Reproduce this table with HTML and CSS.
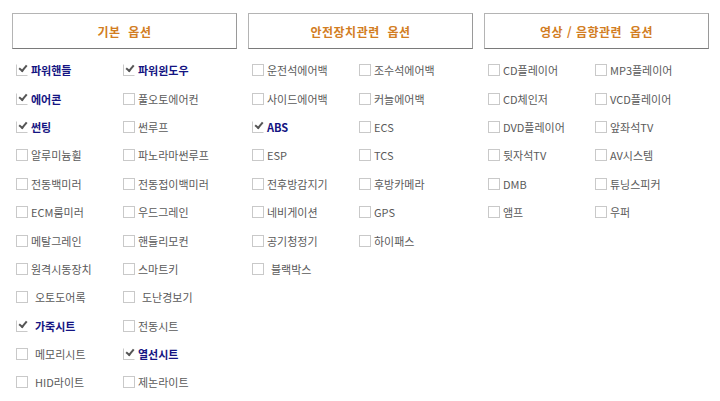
FILE: index.html
```html
<!DOCTYPE html>
<html lang="ko">
<head>
<meta charset="utf-8">
<link rel="stylesheet" href="styles.css">
</head>
<body>
<div class="page">
  <section class="group">
    <div class="head">기본&nbsp;&nbsp;옵션</div>
    <ul class="opts">
      <li class="on"><span class="cb"></span>파워핸들</li>
      <li class="on"><span class="cb"></span>파워윈도우</li>
      <li class="on"><span class="cb"></span>에어콘</li>
      <li><span class="cb"></span>풀오토에어컨</li>
      <li class="on"><span class="cb"></span>썬팅</li>
      <li><span class="cb"></span>썬루프</li>
      <li><span class="cb"></span>알루미늄휠</li>
      <li><span class="cb"></span>파노라마썬루프</li>
      <li><span class="cb"></span>전동백미러</li>
      <li><span class="cb"></span>전동접이백미러</li>
      <li><span class="cb"></span>ECM룸미러</li>
      <li><span class="cb"></span>우드그레인</li>
      <li><span class="cb"></span>메탈그레인</li>
      <li><span class="cb"></span>핸들리모컨</li>
      <li><span class="cb"></span>원격시동장치</li>
      <li><span class="cb"></span>스마트키</li>
      <li class="sp"><span class="cb"></span>오토도어록</li>
      <li class="sp"><span class="cb"></span>도난경보기</li>
      <li class="on sp"><span class="cb"></span>가죽시트</li>
      <li><span class="cb"></span>전동시트</li>
      <li class="sp"><span class="cb"></span>메모리시트</li>
      <li class="on"><span class="cb"></span>열선시트</li>
      <li class="sp"><span class="cb"></span>HID라이트</li>
      <li><span class="cb"></span>제논라이트</li>
    </ul>
  </section>
  <section class="group">
    <div class="head">안전장치관련&nbsp;&nbsp;옵션</div>
    <ul class="opts">
      <li><span class="cb"></span>운전석에어백</li>
      <li><span class="cb"></span>조수석에어백</li>
      <li><span class="cb"></span>사이드에어백</li>
      <li><span class="cb"></span>커늘에어백</li>
      <li class="on"><span class="cb"></span>ABS</li>
      <li><span class="cb"></span>ECS</li>
      <li><span class="cb"></span>ESP</li>
      <li><span class="cb"></span>TCS</li>
      <li><span class="cb"></span>전후방감지기</li>
      <li><span class="cb"></span>후방카메라</li>
      <li><span class="cb"></span>네비게이션</li>
      <li><span class="cb"></span>GPS</li>
      <li><span class="cb"></span>공기청정기</li>
      <li><span class="cb"></span>하이패스</li>
      <li class="sp"><span class="cb"></span>블랙박스</li>
    </ul>
  </section>
  <section class="group">
    <div class="head">영상&nbsp;/&nbsp;음향관련&nbsp;&nbsp;옵션</div>
    <ul class="opts">
      <li><span class="cb"></span>CD플레이어</li>
      <li><span class="cb"></span>MP3플레이어</li>
      <li><span class="cb"></span>CD체인저</li>
      <li><span class="cb"></span>VCD플레이어</li>
      <li><span class="cb"></span>DVD플레이어</li>
      <li><span class="cb"></span>앞좌석TV</li>
      <li><span class="cb"></span>뒷자석TV</li>
      <li><span class="cb"></span>AV시스템</li>
      <li><span class="cb"></span>DMB</li>
      <li><span class="cb"></span>튜닝스피커</li>
      <li><span class="cb"></span>앰프</li>
      <li><span class="cb"></span>우퍼</li>
    </ul>
  </section>
</div>
</body>
</html>
```

FILE: styles.css
```css
html, body {
  margin: 0;
  padding: 0;
  background: #ffffff;
}

.page {
  display: flex;
  gap: 11px;
  padding: 13px 0 0 12px;
  font-family: "Noto Sans CJK KR", "Noto Sans", sans-serif;
}

.group {
  width: 225px;
}

.head {
  box-sizing: border-box;
  height: 36px;
  border: 1px solid #b4b4b4;
  border-bottom-color: #7a7a7a;
  border-right-color: #9a9a9a;
  display: flex;
  align-items: center;
  justify-content: center;
  font-size: 12px;
  font-weight: bold;
  color: #d27d22;
  letter-spacing: 0.5px;
}

.opts {
  list-style: none;
  margin: 7px 0 0 0;
  padding: 0 0 0 4px;
  display: grid;
  grid-template-columns: 107px 1fr;
  grid-auto-rows: 28.4px;
}

.opts li {
  display: flex;
  align-items: center;
  font-size: 11px;
  color: #5a5a5a;
  white-space: nowrap;
}

.opts li.sp {
  gap: 4px;
}

.cb {
  box-sizing: border-box;
  width: 12px;
  height: 12px;
  border: 1px solid #c9c9c9;
  background: #fff;
  margin-right: 3px;
  position: relative;
  flex: none;
}

.opts li.on {
  color: #141482;
  font-weight: bold;
}

.opts li.on .cb {
  border-top-color: #fff;
  border-right-color: #fff;
}

.opts li.on .cb::after {
  content: "";
  position: absolute;
  left: 2px;
  top: 0px;
  width: 6px;
  height: 3px;
  border-left: 2px solid #555;
  border-bottom: 2px solid #555;
  transform: rotate(-50deg);
}
```
